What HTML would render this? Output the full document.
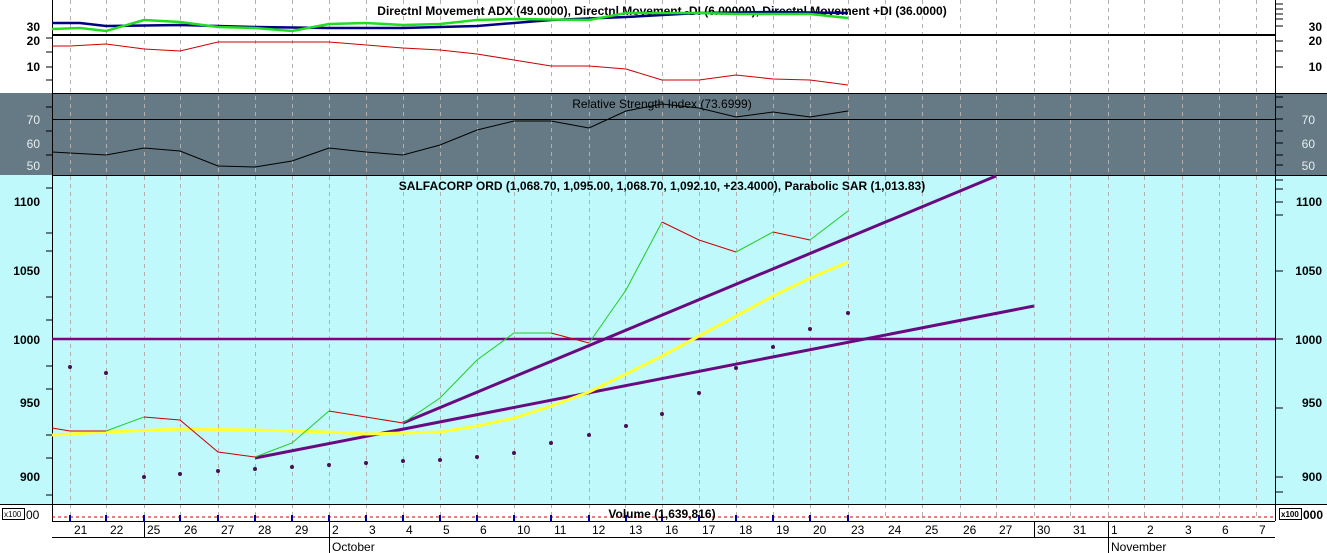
<!DOCTYPE html>
<html><head><meta charset="utf-8"><style>
html,body{margin:0;padding:0;background:#fff;}
svg{display:block;font-family:"Liberation Sans",sans-serif;}
</style></head><body>
<svg width="1327" height="553" viewBox="0 0 1327 553" xmlns="http://www.w3.org/2000/svg">
<rect x="0" y="0" width="1327" height="93" fill="#fff"/>
<rect x="0" y="93" width="1327" height="82" fill="#657a84"/>
<rect x="0" y="175" width="1327" height="329" fill="#bff9fc"/>
<rect x="0" y="504" width="1327" height="49" fill="#fff"/>
<g stroke="#b0b0b0" stroke-dasharray="4,4" stroke-width="1">
<path d="M70.5 0V520M106.5 0V520M144.5 0V520M180.5 0V520M218.5 0V520M255.5 0V520M292.5 0V520M329.5 0V520M366.5 0V520M403.5 0V520M440.5 0V520M477.5 0V520M514.5 0V520M551.5 0V520M589.5 0V520M625.5 0V520M662.5 0V520M699.5 0V520M736.5 0V520M773.5 0V520M810.5 0V520M848.5 0V520M885.5 0V520M922.5 0V520M960.5 0V520M996.5 0V520M1034.5 0V520M1070.5 0V520M1108.5 0V520M1144.5 0V520M1182.5 0V520M1219.5 0V520M1256.5 0V520"/>
</g>
<g stroke="#000" stroke-width="1">
<path d="M52.5 0V521M1275.5 0V521"/>
<path d="M52 93.5H1327M52 175.5H1327M0 504.5H1327M52 521.5H1275M52 537.5H1275"/>
<path d="M329.5 521V553M1108.5 521V553M144.5 521V537M1034.5 521V537"/>
</g>
<g stroke="#000"><path d="M52 35H1275" stroke-width="2"/><path d="M52 119.5H1275" stroke-width="1"/></g>
<g font-size="12" font-weight="bold" fill="#000" text-anchor="end">
<text x="40" y="31">30</text><text x="40" y="45">20</text><text x="40" y="71">10</text>
<text x="1322" y="31">30</text><text x="1322" y="45">20</text><text x="1322" y="71">10</text>
<text x="40" y="206">1100</text><text x="40" y="275">1050</text><text x="40" y="344">1000</text><text x="40" y="407">950</text><text x="40" y="481">900</text>
<text x="1322" y="206">1100</text><text x="1322" y="275">1050</text><text x="1322" y="344">1000</text><text x="1322" y="407">950</text><text x="1322" y="481">900</text>
</g>
<g font-size="12" fill="#e8eef0" text-anchor="end">
<text x="40" y="124">70</text><text x="40" y="148">60</text><text x="40" y="170">50</text>
<text x="1315" y="124">70</text><text x="1315" y="148">60</text><text x="1315" y="170">50</text>
</g>
<g stroke="#000"><path d="M46 38H52M46 52H52M46 67H52M46 80H52M46 107H52M46 131H52M46 155H52M46 188H52M46 233H52M46 251H52M46 297H52M46 320H52M46 366H52M46 389H52M46 435H52M46 458H52M46 495H52M1275 4H1283M1275 9H1283M1275 14H1283M1275 19H1283M1275 26H1283M1275 41H1283M1275 51H1283M1275 67H1283M1275 97H1283M1275 107H1283M1275 119H1283M1275 131H1283M1275 143H1283M1275 155H1283M1275 165H1283M1275 180H1283M1275 189H1283M1275 202H1283M1275 215H1283M1275 271H1283M1275 339H1283M1275 408H1283M1275 477H1283M1275 492H1283"/></g>
<text x="662" y="15" font-size="12" font-weight="bold" text-anchor="middle">Directnl Movement ADX (49.0000), Directnl Movement -DI (6.00000), Directnl Movement +DI (36.0000)</text>
<text x="662" y="108" font-size="12" text-anchor="middle">Relative Strength Index (73.6999)</text>
<text x="662" y="190" font-size="12" font-weight="bold" text-anchor="middle">SALFACORP ORD (1,068.70, 1,095.00, 1,068.70, 1,092.10, +23.4000), Parabolic SAR (1,013.83)</text>
<polyline fill="none" stroke="#000080" stroke-width="2.5" points="52,23 80,23 106,26 180,25 255,27 329,28 403,28 477,26 551,20 626,17 699,13 773,12 848,13"/>
<polyline fill="none" stroke="#22dd22" stroke-width="2.5" points="52,29 80,28 106,31 144,20 180,22 218,27 255,28 292,31 329,24 366,23 403,25 440,24 477,20 514,19 589,20 626,13 662,13 699,13 736,14 810,14 848,18"/>
<polyline fill="none" stroke="#cc0000" stroke-width="1" points="52,46 70,46 106,44 144,49 180,51 218,42 329,42 403,48 440,50 477,54 514,60 551,66 589,66 626,69 662,80 699,80 736,75 773,79 810,80 848,85"/>
<polyline fill="none" stroke="#000" stroke-width="1" points="52,152 70,153 106,155 144,148 180,151 218,166 255,167 292,161 329,148 366,152 403,155 440,145 477,130 514,121 551,121 589,128 626,111 662,104 699,108 736,117 773,112 810,117 848,111"/>
<path d="M52 339H1275" stroke="#800080" stroke-width="2.5"/>
<path d="M403 423L996 176M255 458L1034 306" stroke="#6a0a80" stroke-width="3"/>
<polyline fill="none" stroke="#ffff33" stroke-width="3" points="52,435 106,432 180,429 255,430 329,432 366,434 403,433 440,432 477,426 514,418 551,406 589,392 626,374 662,356 699,336 736,316 773,296 810,278 848,262"/>
<g fill="none" stroke-width="1">
<polyline stroke="#cc0000" points="52,428 70,431 106,431"/>
<polyline stroke="#22cc22" points="106,431 144,417"/>
<polyline stroke="#cc0000" points="144,417 180,420 218,452 255,457"/>
<polyline stroke="#22cc22" points="255,457 292,443 329,411"/>
<polyline stroke="#cc0000" points="329,411 366,417 403,423"/>
<polyline stroke="#22cc22" points="403,423 440,398 477,360 514,333 551,333"/>
<polyline stroke="#cc0000" points="551,333 589,343"/>
<polyline stroke="#22cc22" points="589,343 626,290 662,222"/>
<polyline stroke="#cc0000" points="662,222 699,240 736,252"/>
<polyline stroke="#22cc22" points="736,252 773,232"/>
<polyline stroke="#cc0000" points="773,232 810,240"/>
<polyline stroke="#22cc22" points="810,240 848,211"/>
</g>
<g fill="#4a1050">
<circle cx="70" cy="367" r="2"/><circle cx="106" cy="373" r="2"/><circle cx="144" cy="477" r="2"/><circle cx="180" cy="474" r="2"/><circle cx="218" cy="471" r="2"/><circle cx="255" cy="469" r="2"/><circle cx="292" cy="467" r="2"/><circle cx="329" cy="465" r="2"/><circle cx="366" cy="463" r="2"/><circle cx="403" cy="461" r="2"/><circle cx="440" cy="460" r="2"/><circle cx="477" cy="457" r="2"/><circle cx="514" cy="453" r="2"/><circle cx="551" cy="443" r="2"/><circle cx="589" cy="435" r="2"/><circle cx="626" cy="426" r="2"/><circle cx="662" cy="414" r="2"/><circle cx="699" cy="393" r="2"/><circle cx="736" cy="368" r="2"/><circle cx="773" cy="347" r="2"/><circle cx="810" cy="329" r="2"/><circle cx="848" cy="313" r="2"/>
</g>
<path d="M52 517H1275" stroke="#cc0000" stroke-dasharray="3,3"/>
<g stroke="#0000aa" stroke-width="2"><path d="M70 515V522M106 515V522M144 515V522M180 515V522M218 515V522M255 515V522M292 515V522M329 515V522M366 515V522M403 515V522M440 515V522M477 515V522M514 515V522M551 515V522M589 515V522M626 515V522M662 515V522M699 515V522M736 515V522M773 515V522M810 515V522M848 515V522"/></g>
<text x="662" y="518" font-size="12" font-weight="bold" text-anchor="middle">Volume (1,639,816)</text>
<rect x="2.5" y="508.5" width="22" height="11" fill="#fff" stroke="#000"/>
<text x="4" y="517" font-size="8">x100</text><text x="26" y="519" font-size="12">00</text>
<rect x="1279.5" y="508.5" width="22" height="11" fill="#fff" stroke="#000"/>
<text x="1281" y="517" font-size="8" font-weight="bold">x100</text><text x="1303" y="519" font-size="12" font-weight="bold">000</text>
<g font-size="12" fill="#000">
<text x="74" y="534">21</text><text x="110" y="534">22</text><text x="147" y="534">25</text><text x="184" y="534">26</text><text x="221" y="534">27</text><text x="258" y="534">28</text><text x="295" y="534">29</text><text x="332" y="534">2</text><text x="369" y="534">3</text><text x="406" y="534">4</text><text x="443" y="534">5</text><text x="480" y="534">6</text><text x="517" y="534">10</text><text x="554" y="534">11</text><text x="592" y="534">12</text><text x="629" y="534">13</text><text x="665" y="534">16</text><text x="702" y="534">17</text><text x="739" y="534">18</text><text x="776" y="534">19</text><text x="813" y="534">20</text><text x="851" y="534">23</text><text x="888" y="534">24</text><text x="925" y="534">25</text><text x="963" y="534">26</text><text x="999" y="534">27</text><text x="1037" y="534">30</text><text x="1073" y="534">31</text><text x="1111" y="534">1</text><text x="1147" y="534">2</text><text x="1185" y="534">3</text><text x="1222" y="534">6</text><text x="1259" y="534">7</text>
<text x="332" y="551">October</text><text x="1111" y="551">November</text>
</g>
</svg>
</body></html>
